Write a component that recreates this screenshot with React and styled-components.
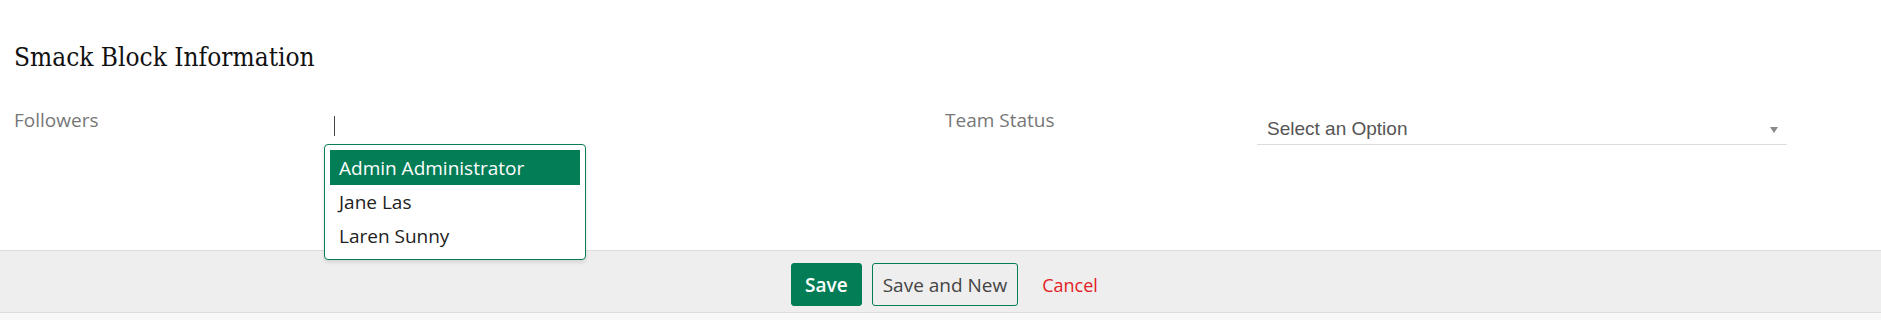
import styled, { createGlobalStyle } from "styled-components";

const Global = createGlobalStyle`
  body {
    margin: 0;
    background: #fff;
    font-family: "Open Sans", "Liberation Sans", sans-serif;
  }
`;

const Page = styled.div`
  width: 1881px;
`;

const Title = styled.h2`
  margin: 0;
  padding: 42px 0 0 14px;
  font-family: "DejaVu Serif", serif;
  font-stretch: semi-condensed;
  font-weight: 400;
  font-size: 26px;
  line-height: 30px;
  color: #111;
`;

const Row = styled.div`
  display: grid;
  grid-template-columns: 310px 621px 312px 530px;
  padding-left: 14px;
  margin-top: 32px;
  align-items: start;
`;

const Label = styled.div`
  padding-top: 4px;
  font-size: 19px;
  line-height: 24px;
  color: #777;
`;

const Field = styled.div`
  position: relative;
  height: 40px;
`;

const Caret = styled.span`
  display: block;
  width: 1px;
  height: 20px;
  margin: 12px 0 0 10px;
  background: #444;
`;

const Menu = styled.ul`
  position: absolute;
  top: 40px;
  left: 0;
  z-index: 2;
  width: 262px;
  box-sizing: border-box;
  margin: 0;
  padding: 5px 5px 6px;
  list-style: none;
  background: #fff;
  border: 1px solid #0a7d57;
  border-radius: 4px;
  box-shadow: 0 2px 4px rgba(0, 0, 0, 0.12);
`;

const Option = styled.li`
  padding: ${(p) => (p.$active ? "6px 9px 5px" : "5px 9px")};
  font-size: 19px;
  line-height: 24px;
  color: ${(p) => (p.$active ? "#fff" : "#222")};
  background: ${(p) => (p.$active ? "#037d56" : "transparent")};
`;

const Select = styled.div`
  display: flex;
  align-items: center;
  justify-content: space-between;
  padding: 13px 9px 3px 10px;
  border-bottom: 1px solid #dcdcdc;
  font-family: "Liberation Sans", Arial, sans-serif;
  font-size: 19px;
  line-height: 24px;
  color: #555;
`;

const Arrow = styled.span`
  width: 0;
  height: 0;
  margin-top: 2px;
  border-left: 4px solid transparent;
  border-right: 4px solid transparent;
  border-top: 6px solid #8a8a8a;
`;

const Footer = styled.div`
  margin-top: 105px;
  display: flex;
  justify-content: center;
  align-items: center;
  gap: 10px;
  padding: 12px 0 6px 8px;
  background: #eee;
  border-top: 1px solid #dcdcdc;
  border-bottom: 1px solid #dcdcdc;
`;

const Button = styled.button`
  height: 43px;
  padding: 0 ${(p) => (p.$primary ? "13px" : "10px")};
  font-family: "Open Sans", sans-serif;
  font-size: 19px;
  font-weight: ${(p) => (p.$primary ? 600 : 400)};
  color: ${(p) => (p.$primary ? "#fff" : "#444")};
  background: ${(p) => (p.$primary ? "#037d56" : "transparent")};
  border: 1px solid #037d56;
  border-radius: 3px;
`;

const CancelLink = styled.a`
  margin-left: 14px;
  font-size: 18px;
  line-height: 24px;
  color: #e3201f;
  text-decoration: none;
`;

const Strip = styled.div`
  height: 10px;
  background: #f8f8f8;
`;

export default function App() {
  return (
    <Page>
      <Global />
      <Title>Smack Block Information</Title>
      <Row>
        <Label>Followers</Label>
        <Field>
          <Caret />
          <Menu>
            <Option $active>Admin Administrator</Option>
            <Option>Jane Las</Option>
            <Option>Laren Sunny</Option>
          </Menu>
        </Field>
        <Label>Team Status</Label>
        <Select>
          <span>Select an Option</span>
          <Arrow />
        </Select>
      </Row>
      <Footer>
        <Button $primary>Save</Button>
        <Button>Save and New</Button>
        <CancelLink href="#">Cancel</CancelLink>
      </Footer>
      <Strip />
    </Page>
  );
}
